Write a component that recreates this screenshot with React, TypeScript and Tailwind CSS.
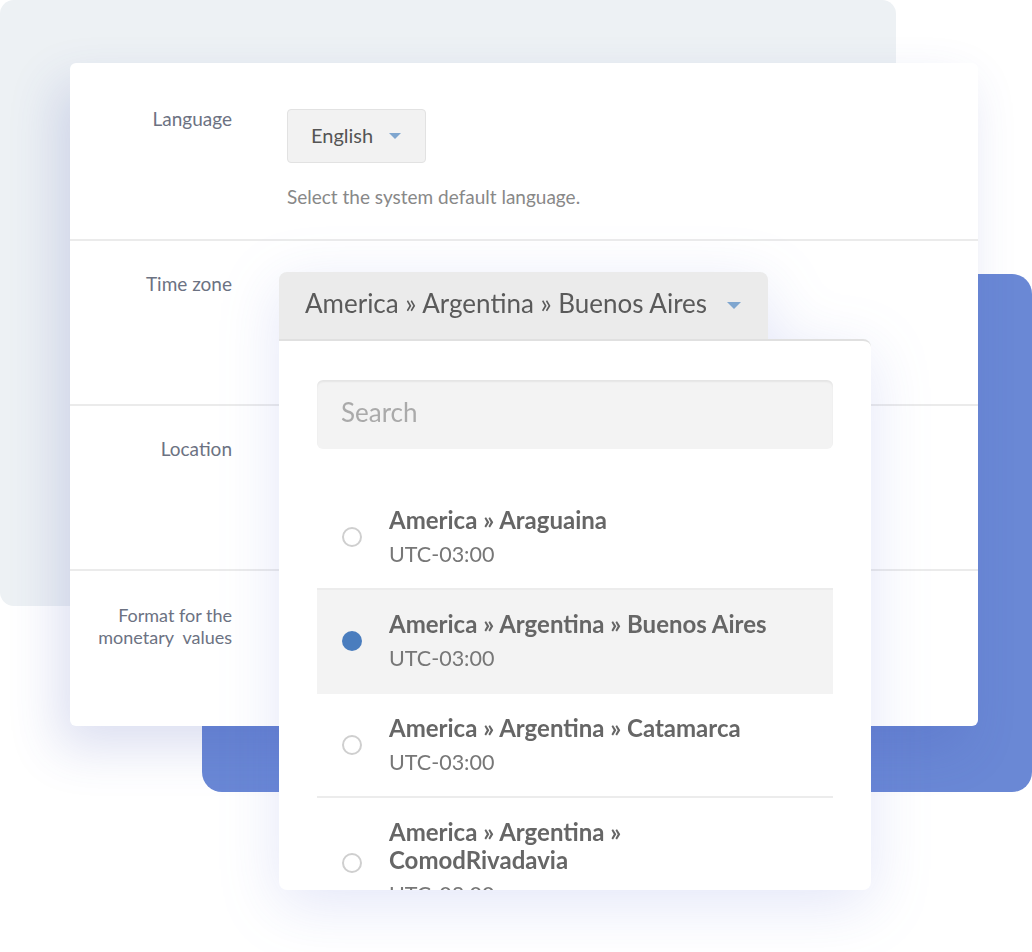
import React from 'react';

interface Zone {
  name: string;
  offset: string;
  selected?: boolean;
}

const zones: Zone[] = [
  { name: 'America » Araguaina', offset: 'UTC-03:00' },
  { name: 'America » Argentina » Buenos Aires', offset: 'UTC-03:00', selected: true },
  { name: 'America » Argentina » Catamarca', offset: 'UTC-03:00' },
  { name: 'America » Argentina » ComodRivadavia', offset: 'UTC-03:00' },
];

function Caret({ className }: { className?: string }) {
  return (
    <svg viewBox="0 0 12 6" className={className}>
      <path d="M0 0h12L6 6z" fill="#7fa6cf" />
    </svg>
  );
}

function Row({ label, children, className }: { label: React.ReactNode; children?: React.ReactNode; className: string }) {
  return (
    <div className={`flex border-b-2 border-[#ebebeb] ${className}`}>
      <div className="w-[162px] shrink-0 text-right text-[19px] leading-[22px] text-[#6c7282]">{label}</div>
      <div className="pl-[55px]">{children}</div>
    </div>
  );
}

export default function App() {
  return (
    <div className="relative w-[1032px] h-[952px] overflow-hidden bg-white font-['Lato',sans-serif]">
      {/* decorative back cards */}
      <div className="absolute left-0 top-0 w-[896px] h-[606px] rounded-[14px] bg-[#edf1f4]" />
      <div className="absolute left-[202px] top-[274px] w-[830px] h-[518px] rounded-[20px] bg-[#6a88d5]" />

      {/* settings card */}
      <div className="absolute left-[70px] top-[63px] w-[908px] h-[663px] rounded-md bg-white shadow-[-12px_22px_50px_rgba(60,80,180,0.18)]">
        <Row label="Language" className="h-[178px] pt-[45px]">
          <div className="mt-px flex h-[54px] w-[139px] items-center rounded border border-[#e2e2e2] bg-[#f2f2f2] pl-[23px]">
            <span className="-mt-[3px] text-[20px] text-[#555]">English</span>
            <Caret className="ml-[16px] w-3 h-[6px]" />
          </div>
          <p className="mt-[23px] text-[19px] leading-[22px] text-[#888]">Select the system default language.</p>
        </Row>
        <Row label="Time zone" className="h-[165px] pt-[32px]" />
        <Row label="Location" className="h-[165px] pt-[32px]" />
        <div className="flex pt-[33px]">
          <div className="w-[162px] shrink-0 text-right text-[18px] leading-[22px] text-[#6c7282]">
            Format for the
            <br />
            monetary&nbsp; values
          </div>
        </div>

        {/* open time zone dropdown */}
        <div className="absolute left-[209px] top-[209px] w-[592px] drop-shadow-[0_14px_30px_rgba(80,100,210,0.16)]">
          <div className="flex h-[67px] w-[489px] items-center rounded-t-lg bg-[#ebebeb] pl-[26px]">
            <span className="-mt-[4px] text-[26px] text-[#5a5a5a]">America » Argentina » Buenos Aires</span>
            <Caret className="ml-[20px] w-[14px] h-[7px]" />
          </div>
          <div className="h-[551px] overflow-hidden rounded-b-lg rounded-tr-lg border-t-2 border-[#e0e0e0] bg-white px-[38px] pt-[39px]">
            <div className="flex h-[69px] items-center rounded-md bg-[#f3f3f3] pl-6 shadow-[inset_0_2px_2px_rgba(0,0,0,0.06)]">
              <span className="-mt-[5px] text-[26px] text-[#aaa]">Search</span>
            </div>
            <ul className="mt-[37px]">
              {zones.map((z) => (
                <li
                  key={z.name}
                  className={`flex items-center border-b-2 pl-[25px] py-[20px] ${
                    z.selected ? 'bg-[#f3f3f3] border-[#f3f3f3]' : 'border-[#ececec]'
                  }`}
                >
                  {z.selected ? (
                    <span className="h-5 w-5 shrink-0 rounded-full bg-[#4a7dbe]" />
                  ) : (
                    <span className="h-5 w-5 shrink-0 rounded-full border-2 border-[#cfcfcf]" />
                  )}
                  <div className="ml-[27px] max-w-[390px]">
                    <div className="text-[24px] font-bold leading-[28px] text-[#666]">{z.name}</div>
                    <div className="mt-[6px] text-[21.5px] leading-[28px] text-[#777]">{z.offset}</div>
                  </div>
                </li>
              ))}
            </ul>
          </div>
        </div>
      </div>
    </div>
  );
}
